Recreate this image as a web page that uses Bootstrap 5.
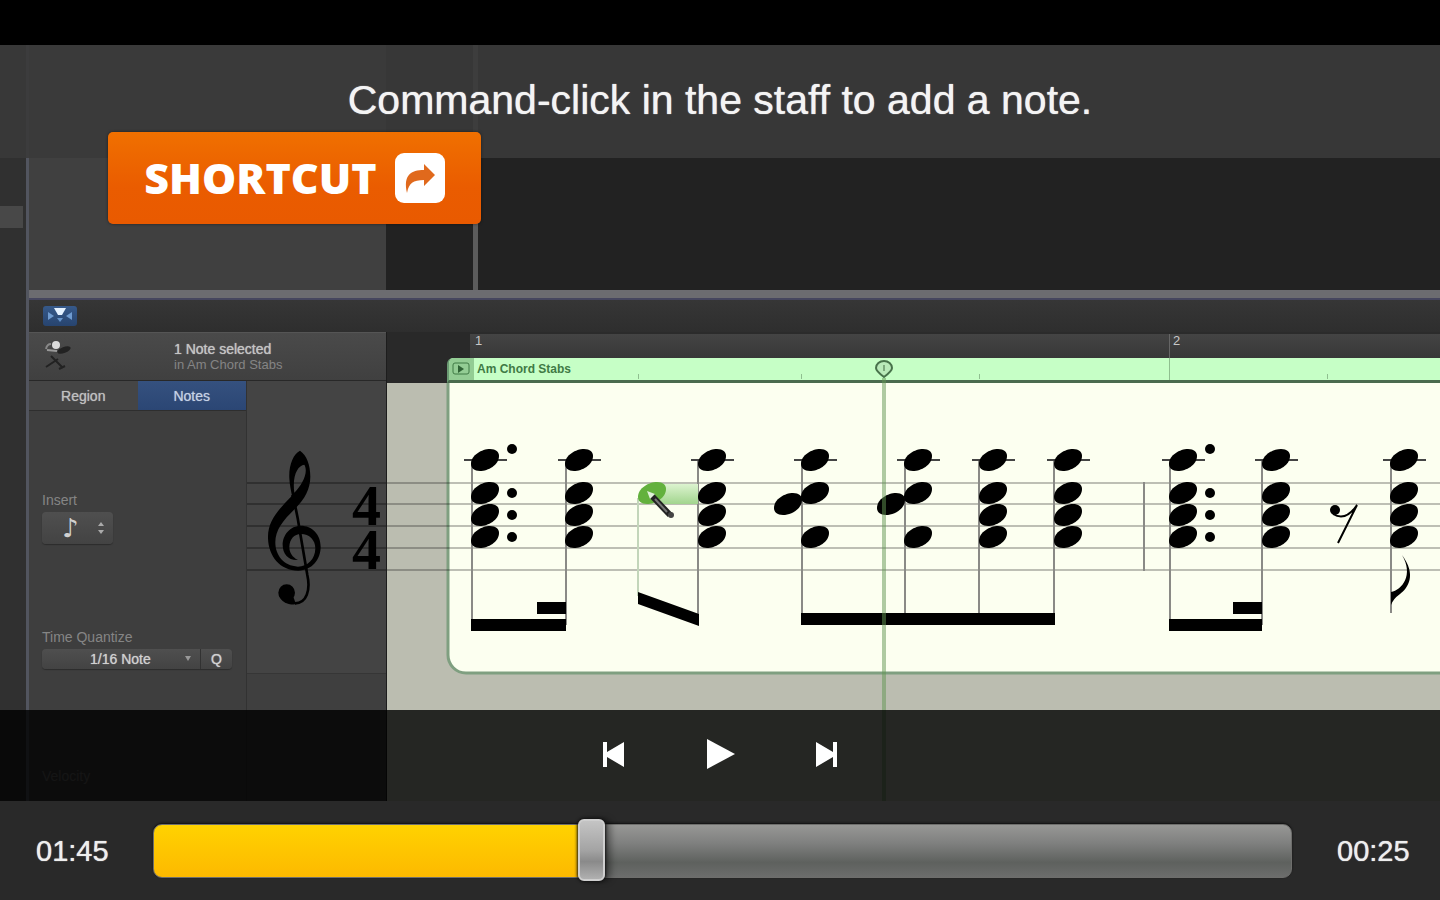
<!DOCTYPE html>
<html lang="en">
<head>
<meta charset="utf-8">
<meta name="viewport" content="width=device-width, initial-scale=1">
<title>Score editor lesson</title>
<link href="https://cdn.jsdelivr.net/npm/bootstrap@5.3.0/dist/css/bootstrap.min.css" rel="stylesheet">
<style>
  body { background: #000; font-family: "Liberation Sans", Arial, sans-serif; font-size: 14px; line-height: 16px; overflow: hidden; }
  svg { display: block; }
  button { font: inherit; }
  .letterbox { height: 45px; }

  /* recorded application window */
  .rail { width: 29px; background: #303030; padding-top: 161px; border-right: 3px solid #52555f; }
  .rail-strip { height: 22px; margin-right: 3px; background: #484848; }
  .arrange { height: 245px; }
  .side { width: 357px; }
  .arrange .side { background: #404040; }
  .lanes { background: #222; }
  .lane-edge { width: 5px; margin-left: 87px; background: #5c5c5c; }
  .splitter { height: 10px; background: #6c6c70; border-bottom: 2px solid #46465e; }
  .tool-row { height: 32px; padding: 6px 14px; background: linear-gradient(#363636, #2e2e2e); }
  .catch-btn { width: 34px; height: 20px; border-radius: 3px; background: linear-gradient(#36598a, #27446f); }
  .info { height: 49px; background: linear-gradient(#4a4a4a, #404040); border-top: 1px solid #555; border-bottom: 1px solid #282828; padding: 8px 0 0 14px; }
  .info-text { margin-left: 102px; line-height: 16px; }
  .info-title { font-size: 14px; color: #c4c4c4; text-shadow: 0 0 1px #c4c4c4; }
  .info-sub { font-size: 13px; color: #858585; }
  .inspector { width: 218px; background: #3e3e3e; border-right: 1px solid #323232; }
  .tab-row button { height: 30px; color: #c0c0c0; background: #454545; border-bottom: 1px solid #2e2e2e !important; text-shadow: 0 0 1px #aaa; }
  .tab-row button.active { background: linear-gradient(#35517f, #2b4674); color: #c3d2ea; }
  .fields { padding: 81px 14px 0 13px; color: #858585; }
  .field-select { appearance: none; border: 0; border-radius: 4px; background: linear-gradient(#4f4f4f, #434343); color: #d0d0d0; box-shadow: 0 1px 1px #2c2c2c; padding: 0; }
  .insert-select { width: 71px; height: 32px; padding-left: 20px; font: 26px/30px "DejaVu Sans", sans-serif; }
  .insert-gap { margin-bottom: 85px; }
  .quantize-select { width: 158px; height: 20px; padding-left: 48px; border-radius: 4px 0 0 4px; text-shadow: 0 0 1px #bbb; }
  .q-btn { width: 32px; height: 20px; border-radius: 0 4px 4px 0; border-left: 1px solid #333; text-shadow: 0 0 1px #ccc; }
  .select-mark { right: 8px; top: 50%; transform: translateY(-50%); }
  .field-gap { margin-bottom: 99px; }
  .faint { color: #6a6a6a; }
  .clef-pane { background: #444; }
  .clef-pane .time-sig { font: bold 58px "Liberation Serif", serif; }
  .tracks { background: #292929; border-left: 1px solid #1d1d1d; }
  .ruler { height: 26px; margin-left: 83px; background: linear-gradient(#444, #383838); border-top: 2px solid #2b2b2b; color: #c8c8c8; font-size: 13px; line-height: 14px; }
  .bar-1 { width: 699px; padding-left: 5px; }
  .bar-2 { border-left: 1px solid #666; padding-left: 3px; }
  .region-head { height: 25px; margin-left: 60px; border-bottom: 3px solid #4a6b4e; border-left: 2px solid #6b9a73; border-radius: 6px 0 0 0; background: #c6ffc6; }
  .region-flag { width: 25px; height: 22px; background: #93cd94; }
  .region-name { color: #3f7a45; font-size: 12px; font-weight: bold; padding-left: 3px; width: 160px; white-space: nowrap; }
  .score { background: #bbbdb0; }
  .playhead { left: 487px; top: 28px; bottom: 0; width: 20px; }
  .playhead-line { width: 4px; margin-left: 8px; background: rgba(98, 150, 82, .5); }

  /* lesson overlays */
  .caption-band { height: 113px; background: rgba(58, 58, 58, .9); color: #f4f4f4; font-size: 41px; line-height: 48px; text-shadow: 0 0 1px #eee; }
  .shortcut { left: 108px; top: 87px; width: 373px; height: 92px; border-radius: 5px; background: linear-gradient(#f07000, #ea5c00 60%, #e95a00); box-shadow: 0 0 3px rgba(0, 0, 0, .5); color: #fff; font: 800 43px/48px "Open Sans", sans-serif; gap: 18px; }
  .transport { height: 91px; background: rgba(0, 0, 0, .8); gap: 76px; padding-bottom: 4px; }

  /* time line */
  .timeline { height: 99px; background: #292929; color: #eee; font-size: 29px; line-height: 32px; padding: 0 29px 0 36px; }
  .clock { width: 74px; text-shadow: 0 0 1px #eee; }
  .seek { appearance: none; height: 62px; background: none; margin: 0 45px 0 43px; min-width: 0; --stop: 38%; }
  .seek::-webkit-slider-runnable-track { height: 54px; border-radius: 9px; border: 1px solid #6e6e6c; box-shadow: 0 -1px 2px #111;
    background: linear-gradient(#ffd200, #fdb900) left / var(--stop) 100% no-repeat, linear-gradient(#979795, #7f807f 35%, #5e615e 72%, #6c6d6c); }
  .seek::-webkit-slider-thumb { appearance: none; width: 27px; height: 62px; margin-top: -6px; border-radius: 6px; border: 2px solid #cfcfcf; background: linear-gradient(#c4c4c4, #a4a4a4 50%, #8a8a8a 70%, #b0b0b0); box-shadow: 0 0 3px 1px #111, 6px 0 6px rgba(0, 0, 0, .35); }
</style>
</head>
<body>
<div class="d-flex flex-column vh-100">
  <div class="letterbox flex-shrink-0"></div>

  <main class="position-relative flex-grow-1 d-flex overflow-hidden">
    <div class="rail flex-shrink-0"><div class="rail-strip"></div></div>

    <div class="flex-grow-1 d-flex flex-column overflow-hidden">
      <div class="arrange d-flex flex-shrink-0">
        <div class="side flex-shrink-0"></div>
        <div class="lanes flex-grow-1 d-flex"><div class="lane-edge"></div></div>
      </div>
      <div class="splitter flex-shrink-0"></div>
      <div class="tool-row flex-shrink-0">
        <button class="catch-btn btn p-0 border-0 d-block" type="button" aria-label="Catch playhead">
          <svg width="34" height="20"><path d="M11 2h12l-4 7h-4z" fill="#e4f1ff"/><path d="M5 6l6 4-6 4zM29 6l-6 4 6 4z" fill="#6f9bd0"/><path d="M14 12h6l-3 4z" fill="#6592c8"/></svg>
        </button>
      </div>

      <div class="flex-grow-1 d-flex overflow-hidden">
        <div class="side flex-shrink-0 d-flex flex-column">
          <div class="info d-flex flex-shrink-0">
            <svg width="29" height="32" fill="none" stroke="#222" stroke-width="2"><ellipse cx="21" cy="9" rx="7" ry="3" fill="#222" stroke="none" transform="rotate(-20 21 9)"/><path d="M3 26L15 18M8 15l12 12M16 28l6-3"/><path d="M3 8q1-5 5-5" stroke="#888"/><circle cx="13" cy="4" r="4" fill="#ddd" stroke="none"/><path d="M4 9l10 1" stroke="#999"/></svg>
            <div class="info-text"><div class="info-title">1 Note selected</div><div class="info-sub">in Am Chord Stabs</div></div>
          </div>
          <div class="flex-grow-1 d-flex">
            <div class="inspector flex-shrink-0">
              <div class="tab-row d-flex">
                <button type="button" class="border-0 flex-fill w-50 p-0">Region</button>
                <button type="button" class="border-0 flex-fill w-50 p-0 active">Notes</button>
              </div>
              <div class="fields">
                <label for="insert" class="d-block mb-1">Insert</label>
                <div class="position-relative insert-gap d-inline-block">
                  <select id="insert" class="field-select insert-select d-block"><option>♪</option></select>
                  <svg class="select-mark position-absolute" width="8" height="14" fill="#aaa"><path d="M1 5l3-4 3 4zM1 9l3 4 3-4z"/></svg>
                </div>
                <label for="quantize" class="d-block mb-1">Time Quantize</label>
                <div class="d-flex field-gap">
                  <div class="position-relative">
                    <select id="quantize" class="field-select quantize-select d-block"><option>1/16 Note</option></select>
                    <svg class="select-mark position-absolute" width="8" height="6" fill="#999"><path d="M1 0h6L4 5z"/></svg>
                  </div>
                  <button type="button" class="field-select q-btn">Q</button>
                </div>
                <div class="faint">Velocity</div>
              </div>
            </div>
            <svg class="clef-pane flex-grow-1 h-100" width="139">
              <g transform="translate(-247 -381)">
                <g fill="#303030"><path d="M247 482h140v2H247zM247 503h140v2H247zM247 525h140v2H247zM247 547h140v2H247zM247 569h140v2H247z"/></g>
                <path d="M247 673h140v130H247z" fill="#3f3f3f"/><path d="M247 673h140v1H247z" fill="#363636"/>
                <g transform="translate(240 430) scale(.3333)">
                  <path fill-rule="evenodd" d="M180 62C160 72 146 105 148 145C149 165 153 182 156 197C120 235 82 270 84 325C86 380 120 422 175 422C215 420 242 390 242 350C242 312 215 287 183 287C150 287 128 315 128 345C128 372 145 392 174 390C157 381 148 368 148 350C149 328 162 312 183 312C208 312 226 330 226 355C226 388 202 410 174 410C130 408 106 375 106 337C106 300 128 272 165 236C195 207 211 175 211 140C211 105 200 75 180 62ZM193 104C174 106 156 135 163 188C188 163 206 126 193 104Z"/>
                  <path d="M157 195Q170 240 179 300L202 435C212 480 200 520 165 520" fill="none" stroke="#000" stroke-width="8"/>
                  <circle cx="140" cy="488" r="25"/><path d="M116 494C124 518 145 525 168 523L160 500z"/>
                </g>
                <text class="time-sig"><tspan x="352" y="525">4</tspan><tspan x="352" y="569">4</tspan></text>
              </g>
            </svg>
          </div>
        </div>

        <div class="tracks flex-grow-1 d-flex flex-column position-relative overflow-hidden">
          <div class="ruler d-flex flex-shrink-0"><div class="bar-1 flex-shrink-0">1</div><div class="bar-2">2</div></div>
          <div class="region-head d-flex flex-shrink-0 align-items-center overflow-hidden">
            <div class="region-flag flex-shrink-0"><svg width="25" height="22" fill="none" stroke="#3f7a45"><rect x="4" y="5" width="16" height="11" rx="2"/><path d="M9 7l6 4-6 4z" fill="#2f6335" stroke="none"/></svg></div>
            <div class="region-name flex-shrink-0">Am Chord Stabs</div>
            <svg class="flex-shrink-0" width="800" height="22" stroke="#8fbf8f"><path d="M4.500 16v5M167.500 16v5M345.500 16v5M535.500 0v22M693.500 16v5"/></svg>
          </div>
          <svg class="score flex-grow-1 w-100">
            <defs>
              <path id="head" d="M-14 4C-14 -5 -3 -11 5 -11C11 -11 14 -8 14 -4C14 5 3 11 -5 11C-11 11 -14 8 -14 4Z"/>
              <g id="top"><path d="M-21 0H22" stroke="#444" stroke-width="2"/><use href="#head"/></g>
              <g id="chord"><use href="#top"/><use href="#head" y="33"/><use href="#head" y="55"/><use href="#head" y="77"/></g>
              <g id="open-chord"><use href="#top"/><use href="#head" y="33"/><use href="#head" y="77"/><use href="#head" x="-27" y="44"/></g>
              <g id="dots"><circle cy="-11" r="5"/><circle cy="33" r="5"/><circle cy="55" r="5"/><circle cy="77" r="5"/></g>
              <linearGradient id="length" x2="0" y2="1"><stop stop-color="#dcf3cf"/><stop offset="1" stop-color="#a2d58e"/></linearGradient>
            </defs>
            <rect x="61" y="-40" width="110%" height="330" rx="18" fill="#fcfff0" stroke="#7f9f80" stroke-width="3"/>
            <g fill="#000" fill-opacity=".25"><rect y="99" width="100%" height="2"/><rect y="120" width="100%" height="2"/><rect y="142" width="100%" height="2"/><rect y="164" width="100%" height="2"/><rect y="186" width="100%" height="2"/></g>
            <g transform="translate(-387 -383)">
              <g stroke="#8a8a86" stroke-width="2"><path d="M472 460V625M566 460V625M698 460V620M802 460V620M905 460V620M979 460V620M1054 460V620M1170 460V625M1262 460V625M1391 460V613M1144 482V571"/><path d="M638 498V596" stroke="#c3d6ba"/></g>
              <path d="M471 619h95v12h-95zM537 602h29v12h-29zM638 592l61 22v12l-61-22zM801 613h254v12H801zM1169 619h93v12h-93zM1233 602h29v12h-29z"/>
              <rect x="655" y="484" width="43" height="20" fill="url(#length)"/>
              <use href="#head" x="652" y="493" fill="#63b13d"/>
              <path d="M652 496L670 515" stroke="#222" stroke-width="6"/><path d="M647 491l8 3-5 5z" fill="#dff0d8"/><path d="M655 499L667 512" stroke="#777" stroke-width="2"/><circle cx="671" cy="515" r="3" fill="#444"/>
              <use href="#chord" x="485" y="460"/><use href="#dots" x="512" y="460"/>
              <use href="#chord" x="579" y="460"/><use href="#chord" x="712" y="460"/>
              <use href="#open-chord" x="815" y="460"/><use href="#open-chord" x="918" y="460"/>
              <use href="#chord" x="993" y="460"/><use href="#chord" x="1068" y="460"/>
              <use href="#chord" x="1183" y="460"/><use href="#dots" x="1210" y="460"/>
              <use href="#chord" x="1276" y="460"/><use href="#chord" x="1404" y="460"/>
              <circle cx="1335" cy="510" r="5"/><path d="M1333 514C1343 520 1351 514 1357 505L1338 543" fill="none" stroke="#000" stroke-width="2"/>
              <path d="M1391 592C1402 590 1414 575 1402 555C1417 575 1408 588 1400 594Q1393 599 1391 605z"/>
            </g>
          </svg>
          <div class="playhead position-absolute d-flex flex-column">
            <svg class="flex-shrink-0" width="20" height="18"><path d="M2 8a8 7 0 0 1 16 0q0 3-8 9q-8-6-8-9z" fill="#b9eab9" stroke="#47724a" stroke-width="2"/><path d="M10 5v6" stroke="#7da97d" stroke-width="2"/></svg>
            <div class="playhead-line flex-grow-1"></div>
          </div>
        </div>
      </div>
    </div>

    <div class="caption-band position-absolute top-0 start-0 w-100 d-flex align-items-center justify-content-center pb-1">Command-click in the staff to add a note.</div>
    <button type="button" class="shortcut position-absolute border-0 p-0 d-flex align-items-center justify-content-center">
      <span>SHORTCUT</span>
      <svg width="50" height="50"><rect width="50" height="50" rx="9" fill="#fff"/><path d="M40 22L29 11v6C16 17 8 22 12 40C14 30 18 27 29 27v6z" fill="#e0691c"/></svg>
    </button>
    <div class="transport position-absolute bottom-0 start-0 w-100 d-flex align-items-center justify-content-center">
      <button type="button" class="btn p-0 border-0" aria-label="Previous"><svg width="30" height="30" fill="#fff"><path d="M4 3h4v10L25 3v25L8 18v10H4z"/></svg></button>
      <button type="button" class="btn p-0 border-0" aria-label="Play"><svg width="30" height="30" fill="#fff"><path d="M2 0l28 15L2 30z"/></svg></button>
      <button type="button" class="btn p-0 border-0" aria-label="Next"><svg width="30" height="30" fill="#fff"><path d="M26 3h-4v10L5 3v25l17-10v10h4z"/></svg></button>
    </div>
  </main>

  <footer class="timeline flex-shrink-0 d-flex align-items-center">
    <span class="clock flex-shrink-0">01:45</span>
    <input class="seek flex-grow-1" type="range" min="0" max="1000" value="382" aria-label="Position">
    <span class="clock flex-shrink-0">00:25</span>
  </footer>
</div>
<script src="https://cdn.jsdelivr.net/npm/bootstrap@5.3.0/dist/js/bootstrap.bundle.min.js"></script>
</body>
</html>
